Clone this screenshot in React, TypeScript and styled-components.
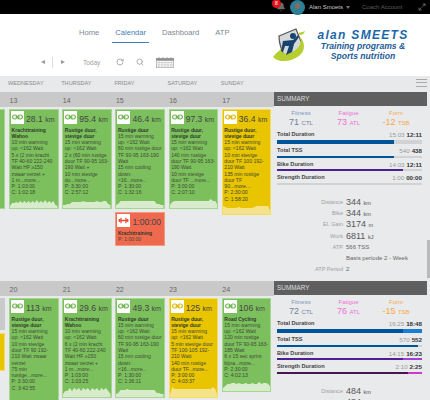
import { Fragment } from "react";
import styled, { createGlobalStyle } from "styled-components";
import { Bell, Maximize2, RotateCw, Search } from "lucide-react";

const GlobalStyle = createGlobalStyle`
  html, body {
    margin: 0;
    height: 400px;
    overflow: hidden;
    background: #e9eaec;
    font-family: "Liberation Sans", Arial, sans-serif;
  }
`;

const Page = styled.div`
  width: 430px;
  height: 400px;
  overflow: hidden;
`;

const TopBar = styled.div`
  height: 14px;
  background: #000;
  display: flex;
  align-items: center;
  font-size: 6px;
  color: #bbb;
`;

const Notify = styled.div`
  position: relative;
  margin-left: 272px;
  width: 14px;
  height: 14px;
  display: flex;
  align-items: center;
  justify-content: flex-end;
  color: #6c6c6c;
`;

const Badge = styled.span`
  position: absolute;
  left: 0;
  top: -1px;
  width: 9px;
  height: 9px;
  border-radius: 50%;
  background: #e3131b;
  color: #fff;
  font-size: 5px;
  line-height: 9px;
  text-align: center;
`;

const Avatar = styled.div`
  width: 15px;
  height: 15px;
  margin: 0 4px 0 4px;
  border-radius: 50%;
  background: radial-gradient(circle at 50% 40%, #8a6a58 0 22%, #2b7f96 24% 60%, #1c4d5e 100%);
`;

const UserName = styled.span`
  color: #c9c9c9;
  width: 37px;
`;

const Caret = styled.span`
  width: 0;
  height: 0;
  border: 2px solid transparent;
  border-top: 3px solid #777;
  margin-top: 3px;
`;

const Coach = styled.span`
  color: #5c5c5c;
  margin-left: 12px;
  width: 56px;
`;

const Head = styled.div`
  height: 62px;
  background: #fff;
  display: flex;
  justify-content: space-between;
`;

const HeadLeft = styled.div`
  display: flex;
  flex-direction: column;
`;

const Nav = styled.nav`
  display: flex;
  gap: 10px;
  margin: 9px 0 0 76px;
`;

const NavItem = styled.a<{ $active?: boolean }>`
  padding: 0 3px;
  height: 19px;
  line-height: 19px;
  font-size: 7.6px;
  color: ${(p) => (p.$active ? "#3f80b4" : "#7b8793")};
  border-bottom: 1px solid ${(p) => (p.$active ? "#3f80b4" : "transparent")};
`;

const Tools = styled.div`
  display: flex;
  align-items: center;
  height: 14px;
  margin: 12px 0 0 41px;
  color: #8b8b8b;
`;

const Arrow = styled.span<{ $left?: boolean }>`
  width: 0;
  height: 0;
  border: 2.5px solid transparent;
  ${(p) => (p.$left ? "border-right: 4px solid #999; border-left: 0;" : "border-left: 4px solid #999; border-right: 0;")}
`;

const ToolDivider = styled.span`
  width: 1px;
  height: 11px;
  background: #ddd;
  margin: 0 8px 0 7px;
`;

const Today = styled.span`
  font-size: 6.5px;
  color: #a0a0a0;
  margin: 0 16px 0 18px;
`;

const SearchSlot = styled.span`
  display: flex;
  margin: 0 12px 0 12px;
`;

const Logo = styled.div`
  display: flex;
  margin: 14px 20px 0 0;
`;

const LogoText = styled.div`
  width: 94px;
  margin-left: 6px;
  text-align: center;
  color: #1d5c96;
  font-style: italic;
  font-weight: bold;
  font-size: 8.6px;
  line-height: 10px;
  white-space: nowrap;
`;

const LogoName = styled.div`
  font-size: 12px;
  line-height: 11px;
  letter-spacing: 1.3px;
  margin-top: 2px;
  color: #1a68a8;
`;

const Weekdays = styled.div`
  height: 13px;
  background: #e8e9eb;
  display: grid;
  grid-template-columns: repeat(5, 53.2px) 1fr;
  padding-left: 8px;
  align-items: center;
  font-size: 5.6px;
  color: #8a8a8a;
`;

const WeekMenu = styled.div`
  justify-self: end;
  width: 11px;
  height: 6px;
  margin-right: 3px;
  border-top: 1px solid #aaa;
  border-bottom: 1px solid #aaa;
  background: linear-gradient(#aaa, #aaa) center / 100% 1px no-repeat;
`;

const Body = styled.div`
  display: flex;
`;

const Weeks = styled.div`
  width: 427px;
`;

const Track = styled.div`
  width: 3px;
  height: 311px;
  padding-top: 151px;
  box-sizing: border-box;
`;

const Thumb = styled.div`
  height: 38px;
  background: #b9babc;
`;

const Week = styled.section`
  height: 189px;
  padding-top: 3px;
  box-sizing: border-box;
  display: flex;
  overflow: hidden;
`;

const Days = styled.div`
  width: 274px;
  flex: none;
  overflow: hidden;
`;

const DayRow = styled.div`
  width: 320px;
  margin-left: -44.6px;
  display: grid;
  grid-template-columns: repeat(6, 53.2px);
`;

const DayCol = styled.div`
  display: flex;
  flex-direction: column;
  gap: 3px;
`;

const DayNum = styled.div`
  height: 15px;
  background: #c9c9c9;
  margin-bottom: -1px;
  padding: 4px 0 0 1px;
  box-sizing: border-box;
  font-size: 7px;
  line-height: 9px;
  color: #666;
`;

const tones = {
  green: { bg: "#7cc05e", line: "#a5d68e", chart: "#d9ebcd" },
  yellow: { bg: "#e9c400", line: "#f3dd63", chart: "#f5e38c" },
  red: { bg: "#ef694f", line: "#f39683", chart: "#f8c0b4" },
  blank: { bg: "#c9cacb", line: "#c9cacb", chart: "#c9cacb" },
};

type Tone = keyof typeof tones;

const Card = styled.article<{ $tone: Tone; $h: number }>`
  width: 49.5px;
  height: ${(p) => p.$h}px;
  margin-left: 0.5px;
  box-sizing: border-box;
  background: ${(p) => tones[p.$tone].bg};
  border: 1px solid ${(p) => tones[p.$tone].line};
  display: flex;
  flex-direction: column;
  overflow: hidden;
  color: #3d4a33;
`;

const CardTop = styled.div`
  display: flex;
  align-items: flex-end;
  padding: 0.5px 0 0 1px;
  margin-bottom: 3px;
`;

const IconBox = styled.div`
  width: 13px;
  height: 13px;
  flex: none;
  background: #fff;
  display: flex;
  align-items: center;
  justify-content: center;
`;

const Amount = styled.div`
  font-size: 8.6px;
  line-height: 9px;
  margin-left: 2px;
  white-space: nowrap;
  color: #444;
`;

const Unit = styled.span`
  font-size: 7px;
`;

const CardLine = styled.div<{ $bold?: boolean }>`
  flex: none;
  height: 6.3px;
  line-height: 6.3px;
  font-size: ${(p) => (p.$bold ? "5px" : "5.1px")};
  font-weight: ${(p) => (p.$bold ? "bold" : "normal")};
  color: ${(p) => (p.$bold ? "#2f3a28" : "#3d4a33")};
  padding-left: 1.5px;
  white-space: pre;
`;

const Chart = styled.svg`
  margin-top: auto;
  display: block;
  width: 100%;
  flex: none;
`;

const Summary = styled.aside`
  flex: 1;
  font-size: 5.8px;
  color: #444;
`;

const SummaryHead = styled.div`
  height: 14px;
  background: #5f5f5f;
  color: #ddd;
  font-size: 6.4px;
  line-height: 14px;
  padding-left: 3px;
`;

const Fitness = styled.div`
  display: grid;
  grid-template-columns: 48px 47px 48px;
  margin: 4px 0 2px 3px;
  text-align: center;
`;

const FitLabel = styled.div<{ $c: string }>`
  font-size: 6px;
  line-height: 7px;
  color: ${(p) => p.$c};
`;

const FitValue = styled.div<{ $c: string }>`
  font-size: 9px;
  line-height: 10px;
  color: ${(p) => p.$c};
`;

const FitUnit = styled.span`
  font-size: 6px;
`;

const Stat = styled.div`
  margin: 3px 5px 0 3px;
`;

const StatRow = styled.div`
  display: flex;
  justify-content: space-between;
  font-size: 5.6px;
  line-height: 7px;
`;

const StatName = styled.b`
  color: #444;
`;

const Planned = styled.span`
  color: #9a9a9a;
  font-size: 6.2px;
`;

const Done = styled.b`
  color: #333;
  font-size: 6.2px;
  margin-left: 2px;
`;

const Bar = styled.div<{ $h: number }>`
  height: ${(p) => p.$h}px;
  background: #d1d2d4;
  margin-top: 0.5px;
  display: flex;
`;

const BarFill = styled.div<{ $c: string; $w: number }>`
  width: ${(p) => p.$w}%;
  background: ${(p) => p.$c};
`;

const Metrics = styled.div`
  display: grid;
  grid-template-columns: 69px 1fr;
  column-gap: 3px;
  align-items: center;
  margin-top: 12px;
  grid-auto-rows: 11.2px;
`;

const MetricLabel = styled.div`
  text-align: right;
  font-size: 5.6px;
  color: #a0a0a0;
`;

const MetricValue = styled.div`
  font-size: 9px;
  color: #555;
  white-space: nowrap;
`;

const MetricSmall = styled.div`
  font-size: 6px;
  color: #666;
  white-space: nowrap;
`;

const MetricUnit = styled.span`
  font-size: 5.6px;
`;

function ChainIcon({ color }: { color: string }) {
  return (
    <svg width="11" height="6" viewBox="0 0 22 12" fill="none" stroke={color} strokeWidth="2.4">
      <rect x="1.2" y="2" width="9" height="8" rx="4" />
      <rect x="11.8" y="2" width="9" height="8" rx="4" />
      <path d="M7 6h8" strokeWidth="3" />
    </svg>
  );
}

function DumbbellIcon() {
  return (
    <svg width="11" height="7" viewBox="0 0 22 14" fill="none" stroke="#ef4f38" strokeWidth="2.6">
      <path d="M1 7h20M6 1.5v11M16 1.5v11" />
      <path d="M3 4v6M19 4v6" />
    </svg>
  );
}

function Spark({ points, color, h }: { points: number[]; color: string; h: number }) {
  const step = 48 / (points.length - 1);
  const top = points.map((p, i) => `${(i * step).toFixed(1)},${(h - p).toFixed(1)}`).join(" ");
  return (
    <Chart height={h} viewBox={`0 0 48 ${h}`} preserveAspectRatio="none">
      <polygon points={`0,${h} ${top} 48,${h}`} fill={color} />
    </Chart>
  );
}

function CalendarIcon() {
  return (
    <svg width="18" height="11" viewBox="0 0 36 22" fill="none" stroke="#8f8f8f" strokeWidth="1">
      <rect x="0.5" y="3" width="35" height="18.5" />
      <rect x="0.5" y="3" width="35" height="4" fill="#8f8f8f" />
      <path d="M6 0v4M14 0v4M22 0v4M30 0v4" strokeWidth="1.5" />
      <path d="M0 11h36M0 14.5h36M0 18h36M6 7v15M12 7v15M18 7v15M24 7v15M30 7v15" strokeWidth="0.6" />
    </svg>
  );
}

function LogoMark() {
  return (
    <svg width="38" height="35" viewBox="0 0 38 35">
      <path d="M7 8 L24 1 L30 16 C30 24 24 28 14 31 C10 24 7 16 7 8Z" fill="#d6d8da" stroke="#555" strokeWidth="1.2" />
      <path d="M1 29 C5 24 8 22 10 20 C9 26 14 28 22 23 C27 20 30 15 28 9 C33 14 34 22 27 28 C20 33 8 36 1 29Z" fill="#b5cf2e" />
      <circle cx="21" cy="8" r="3" fill="#17436f" />
      <path d="M11 13 L21 12 L26 7 L27 9 L22 16 L20 24 L14 27 L17 18 L13 18 L11 24 L9 23Z" fill="#17436f" />
      <path d="M26 5 C29 4 32 4 33 3 C32 6 30 7 28 7Z" fill="#b5cf2e" />
    </svg>
  );
}

type Session = {
  tone: Tone;
  h: number;
  amount?: string;
  unit?: string;
  title?: string;
  text?: string;
  icon?: "chain" | "dumbbell";
  spark?: number[];
  sparkH?: number;
};

const calm = [3, 3, 4, 4, 6, 6, 6, 6, 6, 7, 6, 6, 6, 6, 6, 7, 6, 6, 7, 7, 4, 3];

// first column of each week is the day cut off at the left edge, it has no number
const weekOne: { day?: number; sessions: Session[] }[] = [
  { sessions: [{ tone: "green", h: 100 }] },
  {
    day: 13,
    sessions: [{
      tone: "green", h: 100, amount: "28.1", unit: "km", icon: "chain", sparkH: 10,
      title: "Krachttraining\nWahoo",
      text: "10 min warming\nup: <162 Watt\n5 x (2 min kracht\nTF 40-60 222-240\nWatt HF ≥150\nzwaar verzet +\n1 m...more...\nP: 1:03:00\nC: 1:02:18",
      spark: [2, 5, 5, 6, 5, 7, 5, 7, 5, 7, 5, 7, 5, 8, 5, 7, 5, 8, 5, 7, 5, 7, 3, 2],
    }],
  },
  {
    day: 14,
    sessions: [{
      tone: "green", h: 100, amount: "95.4", unit: "km", icon: "chain", sparkH: 11,
      title: "Rustige duur,\nstevige duur",
      text: "15 min warming\nup: <162 Watt\n2 x (60 min rustige\nduur TF 90-95 163-\n190 Watt +\n10 min stevige\ndu...more...\nP: 3:30:00\nC: 2:57:12",
      spark: calm,
    }],
  },
  {
    day: 15,
    sessions: [
      {
        tone: "green", h: 100, amount: "46.4", unit: "km", icon: "chain", sparkH: 10,
        title: "Rustige duur",
        text: "15 min warming\nup: <162 Watt\n60 min rustige duur\nTF 90-95 163-190\nWatt\n15 min cooling\ndown:\n<16...more...\nP: 1:30:00\nC: 1:32:16",
        spark: [3, 4, 7, 7, 7, 7, 7, 7, 7, 7, 7, 7, 7, 7, 7, 7, 7, 7, 4, 4, 3, 3],
      },
      {
        tone: "red", h: 34, amount: "1:00:00", icon: "dumbbell",
        title: "Krachttraining",
        text: "P: 1:00:00",
      },
    ],
  },
  {
    day: 16,
    sessions: [{
      tone: "green", h: 100, amount: "97.3", unit: "km", icon: "chain", sparkH: 10,
      title: "Rustige duur,\nstevige duur",
      text: "15 min warming\nup: <162 Watt\n140 min rustige\nduur TF 90-95 163-\n190 Watt\n10 min stevige\nduur TF ...more...\nP: 3:00:00\nC: 2:07:10",
      spark: [3, 6, 7, 7, 7, 7, 7, 7, 7, 7, 7, 7, 7, 7, 7, 7, 7, 7, 9, 7, 7, 3],
    }],
  },
  {
    day: 17,
    sessions: [{
      tone: "yellow", h: 106, amount: "36.4", unit: "km", icon: "chain", sparkH: 10,
      title: "Rustige duur,\nstevige duur",
      text: "15 min warming\nup: <162 Watt\n10 min stevige\nduur TF 100 192-\n210 Watt\n135 min rustige\nduur TF\n90...more...\nP: 2:30:00\nC: 1:58:20",
      spark: [8, 7, 6, 6, 6, 6, 6, 7, 6, 6, 6, 6, 6, 6, 7, 8, 8, 8, 8, 8, 8, 2],
    }],
  },
];

const weekTwo: { day?: number; sessions: Session[] }[] = [
  {
    sessions: [
      { tone: "blank", h: 32 },
      { tone: "yellow", h: 38 },
    ],
  },
  {
    day: 20,
    sessions: [{
      tone: "green", h: 125, amount: "113", unit: "km", icon: "chain", sparkH: 9,
      title: "Rustige duur,\nstevige duur",
      text: "15 min warming\nup: <162 Watt\n10 min stevige\nduur TF 90 192-\n210 Watt zwaar\nverzet\n75 min\nrustige...more...\nP: 3:30:00\nC: 3:42:55",
      spark: [3, 4, 8, 5, 5, 5, 5, 5, 5, 5, 8, 5, 5, 5, 5, 5, 5, 5, 5, 8, 5, 4],
    }],
  },
  {
    day: 21,
    sessions: [{
      tone: "green", h: 100, amount: "29.6", unit: "km", icon: "chain", sparkH: 11,
      title: "Krachttraining\nWahoo",
      text: "10 min warming\nup: <162 Watt\n6 x (2 min kracht\nTF 40-60 222-240\nWatt HF ≥150\nzwaar verzet +\n1 m...more...\nP: 1:03:00\nC: 1:03:25",
      spark: [3, 6, 6, 9, 6, 9, 7, 9, 6, 9, 7, 9, 6, 9, 7, 9, 6, 9, 7, 9, 6, 3],
    }],
  },
  {
    day: 22,
    sessions: [
      {
        tone: "green", h: 100, amount: "49.3", unit: "km", icon: "chain", sparkH: 10,
        title: "Rustige duur",
        text: "15 min warming\nup: <162 Watt\n60 min rustige duur\nTF 90-95 163-190\nWatt\n15 min cooling\ndown:\n<16...more...\nP: 1:30:00\nC: 1:36:11",
        spark: [3, 4, 7, 7, 7, 8, 7, 7, 7, 7, 7, 7, 7, 7, 7, 7, 7, 7, 4, 4, 3, 3],
      },
      { tone: "green", h: 20 },
    ],
  },
  {
    day: 23,
    sessions: [{
      tone: "yellow", h: 100, amount: "125", unit: "km", icon: "chain", sparkH: 11,
      title: "Rustige duur,\nstevige duur",
      text: "15 min warming\nup: <162 Watt\n5 min stevige duur\nTF 100-105 192-\n210 Watt\n140 min rustige\nduur TF...more...\nP: 3:00:00\nC: 4:03:37",
      spark: [2, 10, 8, 8, 8, 8, 8, 8, 8, 8, 8, 8, 8, 8, 8, 8, 8, 8, 8, 10, 8, 2],
    }],
  },
  {
    day: 24,
    sessions: [{
      tone: "green", h: 94, amount: "106", unit: "km", icon: "chain", sparkH: 10,
      title: "Road Cycling",
      text: "15 min warming\nup: <162 Watt\n120 min rustige\nduur TF 90-95 163-\n185 Watt\n6 x 15 sec sprint\nbijna...more...\nP: 2:30:00\nC: 4:02:13",
      spark: [3, 5, 7, 7, 8, 8, 7, 8, 7, 7, 8, 7, 7, 8, 7, 7, 9, 7, 8, 8, 7, 4],
    }],
  },
];

const blue = "#00549a";
const purple = "#4f1f8f";

const summaries = [
  {
    fitness: "71",
    fatigue: "73",
    form: "-12",
    stats: [
      { name: "Total Duration", plan: "15:03", done: "12:11", h: 4.5, fills: [{ c: blue, w: 81 }] },
      { name: "Total TSS", plan: "540", done: "438", h: 2, fills: [{ c: blue, w: 81 }] },
      { name: "Bike Duration", plan: "14:03", done: "12:11", h: 2, fills: [{ c: purple, w: 87 }] },
      { name: "Strength Duration", plan: "1:00", done: "00:00", h: 2, fills: [] },
    ],
    metrics: [
      ["Distance", "344", "km"],
      ["Bike", "344", "km"],
      ["El. Gain", "3174", "m"],
      ["Work", "6811", "kJ"],
    ],
  },
  {
    fitness: "72",
    fatigue: "76",
    form: "-15",
    stats: [
      { name: "Total Duration", plan: "16:25", done: "18:48", h: 4.5, fills: [{ c: blue, w: 87 }, { c: "#1a7fd4", w: 13 }] },
      { name: "Total TSS", plan: "570", done: "552", h: 2, fills: [{ c: blue, w: 97 }] },
      { name: "Bike Duration", plan: "14:15", done: "16:23", h: 2, fills: [{ c: purple, w: 87 }, { c: "#a040d8", w: 13 }] },
      { name: "Strength Duration", plan: "2:10", done: "2:25", h: 2, fills: [{ c: "#4a1650", w: 90 }, { c: "#c83cc8", w: 10 }] },
    ],
    metrics: [
      ["Distance", "484", "km"],
      ["Bike", "484", "km"],
    ],
  },
];

function WeekBlock({ days, data, first }: { days: { day?: number; sessions: Session[] }[]; data: (typeof summaries)[number]; first?: boolean }) {
  return (
    <Week>
      <Days>
        <DayRow>
          {days.map((d, col) => (
            <DayCol key={col}>
              <DayNum>{d.day}</DayNum>
              {d.sessions.map((s, i) => (
                <Card key={i} $tone={s.tone} $h={s.h}>
                  {s.icon && (
                    <CardTop>
                      <IconBox>
                        {s.icon === "chain" ? (
                          <ChainIcon color={s.tone === "yellow" ? "#dcb90a" : "#6fb44f"} />
                        ) : (
                          <DumbbellIcon />
                        )}
                      </IconBox>
                      <Amount>
                        {s.amount} {s.unit && <Unit>{s.unit}</Unit>}
                      </Amount>
                    </CardTop>
                  )}
                  {s.title?.split("\n").map((line) => (
                    <CardLine key={line} $bold>
                      {line}
                    </CardLine>
                  ))}
                  {s.text?.split("\n").map((line) => (
                    <CardLine key={line}>{line}</CardLine>
                  ))}
                  {s.spark && <Spark points={s.spark} color={tones[s.tone].chart} h={s.sparkH ?? 10} />}
                </Card>
              ))}
            </DayCol>
          ))}
        </DayRow>
      </Days>
      <Summary>
        <SummaryHead>SUMMARY</SummaryHead>
        <Fitness>
          <FitLabel $c="#7d97b8">Fitness</FitLabel>
          <FitLabel $c="#ee6fd8">Fatigue</FitLabel>
          <FitLabel $c="#f5a94a">Form</FitLabel>
          <FitValue $c="#6f8199">
            {data.fitness} <FitUnit>CTL</FitUnit>
          </FitValue>
          <FitValue $c="#ee6fd8">
            {data.fatigue} <FitUnit>ATL</FitUnit>
          </FitValue>
          <FitValue $c="#f5a94a">
            {data.form} <FitUnit>TSB</FitUnit>
          </FitValue>
        </Fitness>
        {data.stats.map((st) => (
          <Stat key={st.name}>
            <StatRow>
              <StatName>{st.name}</StatName>
              <span>
                <Planned>{st.plan}</Planned>
                <Done>{st.done}</Done>
              </span>
            </StatRow>
            <Bar $h={st.h}>
              {st.fills.map((f) => (
                <BarFill key={f.c} $c={f.c} $w={f.w} />
              ))}
            </Bar>
          </Stat>
        ))}
        <Metrics>
          {data.metrics.map(([label, value, unit]) => (
            <Fragment key={label}>
              <MetricLabel>{label}</MetricLabel>
              <MetricValue>
                {value} <MetricUnit>{unit}</MetricUnit>
              </MetricValue>
            </Fragment>
          ))}
          {first && (
            <>
              <MetricLabel>ATP</MetricLabel>
              <MetricSmall>566 TSS</MetricSmall>
              <span />
              <MetricSmall>Basis periode 2 - Week</MetricSmall>
              <MetricLabel>ATP Period</MetricLabel>
              <MetricSmall>2</MetricSmall>
            </>
          )}
        </Metrics>
      </Summary>
    </Week>
  );
}

export default function App() {
  return (
    <Page>
      <GlobalStyle />
      <TopBar>
        <Notify>
          <Bell size={10} fill="#6c6c6c" strokeWidth={1} />
          <Badge>8</Badge>
        </Notify>
        <Avatar />
        <UserName>Alan Smoets</UserName>
        <Caret />
        <Coach>Coach Account</Coach>
        <Maximize2 size={8} color="#888" />
      </TopBar>
      <Head>
        <HeadLeft>
          <Nav>
            <NavItem>Home</NavItem>
            <NavItem $active>Calendar</NavItem>
            <NavItem>Dashboard</NavItem>
            <NavItem>ATP</NavItem>
          </Nav>
          <Tools>
            <Arrow $left />
            <ToolDivider />
            <Arrow />
            <Today>Today</Today>
            <RotateCw size={8} strokeWidth={2} />
            <SearchSlot>
              <Search size={8} strokeWidth={2} />
            </SearchSlot>
            <CalendarIcon />
          </Tools>
        </HeadLeft>
        <Logo>
          <LogoMark />
          <LogoText>
            <LogoName>alan SMEETS</LogoName>
            Training programs &amp;
            <br />
            Sports nutrition
          </LogoText>
        </Logo>
      </Head>
      <Weekdays>
        <span>WEDNESDAY</span>
        <span>THURSDAY</span>
        <span>FRIDAY</span>
        <span>SATURDAY</span>
        <span>SUNDAY</span>
        <WeekMenu />
      </Weekdays>
      <Body>
        <Weeks>
          <WeekBlock days={weekOne} data={summaries[0]} first />
          <WeekBlock days={weekTwo} data={summaries[1]} />
        </Weeks>
        <Track>
          <Thumb />
        </Track>
      </Body>
    </Page>
  );
}
